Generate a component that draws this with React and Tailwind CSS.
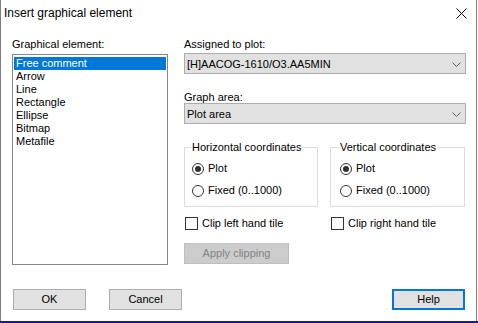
import React from "react";

function Radio({ checked, label }) {
  return (
    <div className="flex items-center h-[13px]">
      <span className="w-[12px] h-[12px] rounded-full border border-[#333333] bg-white flex items-center justify-center shrink-0">
        {checked && <span className="w-[6px] h-[6px] rounded-full bg-[#333333]" />}
      </span>
      <span className="ml-[4px] leading-[13px] whitespace-nowrap">{label}</span>
    </div>
  );
}

function Check({ label }) {
  return (
    <div className="flex items-center h-[13px] ml-[1px]">
      <span className="w-[13px] h-[13px] border border-[#333333] bg-white shrink-0" />
      <span className="ml-[4px] leading-[13px] whitespace-nowrap">{label}</span>
    </div>
  );
}

function Chevron() {
  return (
    <svg width="9" height="5" viewBox="0 0 9 5" className="shrink-0">
      <path d="M0.5 0.5 L4.5 4.5 L8.5 0.5" fill="none" stroke="#606060" strokeWidth="1" />
    </svg>
  );
}

function Combo({ value }) {
  return (
    <div className="h-[21px] w-[282px] border border-[#adadad] bg-[#e1e1e1] flex items-center pt-[1px] pl-[2px] pr-[4px]">
      <span className="flex-1 leading-[13px] whitespace-nowrap">{value}</span>
      <Chevron />
    </div>
  );
}

function Button({ children, className = "" }) {
  return (
    <div className={"h-[21px] w-[73px] bg-[#e1e1e1] flex items-center justify-center leading-[13px] " + className}>
      {children}
    </div>
  );
}

function Group({ title, width, legendOffset, padLeft }) {
  return (
    <fieldset className={"border border-[#dcdcdc] pb-[9px] " + width}>
      <legend className={"px-[1px] leading-[13px] whitespace-nowrap " + legendOffset}>{title}</legend>
      <div className={padLeft}>
        <div className="mt-[8px]">
          <Radio checked label="Plot" />
        </div>
        <div className="mt-[9px]">
          <Radio label="Fixed (0..1000)" />
        </div>
      </div>
    </fieldset>
  );
}

export default function App() {
  const items = ["Free comment", "Arrow", "Line", "Rectangle", "Ellipse", "Bitmap", "Metafile"];
  return (
    <div className="w-[478px] h-[323px] bg-white overflow-hidden font-['Liberation_Sans',Arial,sans-serif] text-[11px] text-black">
      <div className="w-[477px] h-[321px] border-x border-[#7f7f7f] bg-white flex flex-col">
        {/* Title bar */}
        <div className="h-[30px] flex items-start justify-between pl-[3px] pr-[9px]">
          <span className="text-[12px] leading-[16px] pt-[5px] whitespace-nowrap">Insert graphical element</span>
          <svg width="11" height="11" viewBox="0 0 11 11" className="mt-[8px]">
            <path d="M0.5 0.5 L10.5 10.5 M10.5 0.5 L0.5 10.5" stroke="#000" strokeWidth="1" />
          </svg>
        </div>

        {/* Main content */}
        <div className="flex pl-[11px]">
          {/* Left column */}
          <div className="w-[156px] flex flex-col">
            <div className="mt-[8px] leading-[13px] h-[13px]">Graphical element:</div>
            <div className="mt-[3px] h-[211px] border border-[#828790] bg-white pt-[2px] px-[1px]">
              {items.map((it, i) => (
                <div
                  key={it}
                  className={
                    "h-[13px] leading-[13px] pl-[2px] whitespace-nowrap " +
                    (i === 0 ? "bg-[#0078d7] text-white" : "")
                  }
                >
                  {it}
                </div>
              ))}
            </div>
          </div>

          {/* Right column */}
          <div className="ml-[16px] w-[282px] flex flex-col">
            <div className="mt-[8px] leading-[13px] h-[13px]">Assigned to plot:</div>
            <div className="mt-[2px]">
              <Combo value="[H]AACOG-1610/O3.AA5MIN" />
            </div>
            <div className="mt-[17px] leading-[12px] h-[12px]">Graph area:</div>
            <div>
              <Combo value="Plot area" />
            </div>

            <div className="flex mt-[17px]">
              <div className="w-[146px]">
                <Group title="Horizontal coordinates" width="w-[134px]" legendOffset="ml-[6px]" padLeft="pl-[7px]" />
              </div>
              <div className="flex-1">
                <Group title="Vertical coordinates" width="w-[135px]" legendOffset="ml-[8px]" padLeft="pl-[9px]" />
              </div>
            </div>

            <div className="flex mt-[10px]">
              <div className="w-[146px]">
                <Check label="Clip left hand tile" />
              </div>
              <div className="flex-1">
                <Check label="Clip right hand tile" />
              </div>
            </div>

            <div className="mt-[13px] h-[21px] w-[105px] bg-[#cccccc] border border-[#bfbfbf] text-[#838383] flex items-center justify-center leading-[13px]">
              Apply clipping
            </div>
          </div>
        </div>

        {/* Bottom buttons */}
        <div className="flex mt-[24px] pl-[12px] pr-[11px]">
          <Button className="border border-[#adadad]">OK</Button>
          <Button className="ml-[23px] border border-[#adadad]">Cancel</Button>
          <div className="flex-1" />
          <Button className="border-2 border-[#0078d7]">Help</Button>
        </div>
      </div>
      <div className="h-[2px] w-full bg-[#1e1e78]" />
    </div>
  );
}
